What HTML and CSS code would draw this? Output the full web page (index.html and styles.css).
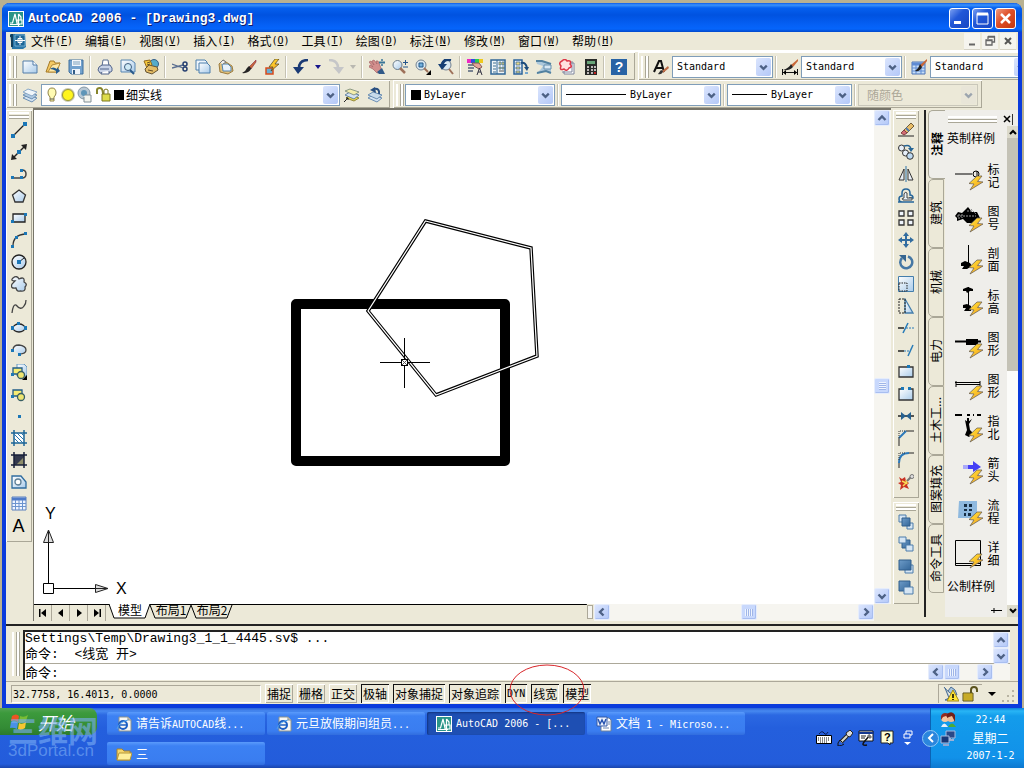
FILE: index.html
```html
<!DOCTYPE html>
<html lang="zh-CN">
<head>
  <meta charset="UTF-8">
  <meta name="viewport" content="width=device-width, initial-scale=1.0">
  <title>AutoCAD 2006 - [Drawing3.dwg]</title>
  <link rel="stylesheet" href="styles.css">
</head>
<body>

  <!-- Shared symbols -->
  <svg class="defs" aria-hidden="true">
    <defs>
      <linearGradient id="sky" x1="0" y1="0" x2="1" y2="1"><stop offset="0" stop-color="#fff"/><stop offset="1" stop-color="#a9cbea"/></linearGradient>
      <linearGradient id="steel" x1="0" y1="0" x2="1" y2="1"><stop offset="0" stop-color="#6e9cc8"/><stop offset="1" stop-color="#336699"/></linearGradient>
      <linearGradient id="bolt-fill" x1="0" y1="0" x2="1" y2="1"><stop offset="0" stop-color="#ffe838"/><stop offset="1" stop-color="#f79a1c"/></linearGradient>
      <symbol id="up" viewBox="0 0 16 16"><path d="M4.5 10L8 6.5L11.5 10" fill="none" stroke="#4d6185" stroke-width="2.4"/></symbol>
      <symbol id="down" viewBox="0 0 16 16"><path d="M4.5 6.5L8 10L11.5 6.5" fill="none" stroke="#4d6185" stroke-width="2.4"/></symbol>
      <symbol id="left" viewBox="0 0 16 16"><path d="M9.5 4.5L6 8L9.5 11.5" fill="none" stroke="#4d6185" stroke-width="2.4"/></symbol>
      <symbol id="right" viewBox="0 0 16 16"><path d="M6.5 4.5L10 8L6.5 11.5" fill="none" stroke="#4d6185" stroke-width="2.4"/></symbol>
      <symbol id="bolt" viewBox="0 0 16 16"><path d="M9 1L1 8.5L6 9L2 15L15 7L9.5 6.5L14 1Z" fill="url(#bolt-fill)" stroke="#6e6558" stroke-width=".8"/></symbol>
      <symbol id="acad" viewBox="0 0 16 16"><path d="M0 0H16V16H0Z" fill="#2a9488" stroke="#fff" stroke-width="2"/><path d="M2 12H4.5L7 3L9 12V14M2 13.5H12M10.5 3V15M10.5 3L13 6V9M9 9H14V13H9Z" fill="none" stroke="#fff" stroke-width="1.2"/></symbol>
      <symbol id="ie" viewBox="0 0 16 16"><path d="M3 1H12L15 4V15H3Z" fill="#f7f7f4" stroke="#8c938f"/><path d="M12 1V4H15" fill="#ccc" stroke="#8c938f"/><circle cx="7" cy="9" r="4" fill="none" stroke="#1d5fc4" stroke-width="2"/><path d="M3.5 9H11" stroke="#1d5fc4" stroke-width="1.5"/><path d="M1 13Q3 6 12 4" fill="none" stroke="#4aa0ee"/></symbol>
      <symbol id="layers" viewBox="0 0 16 16"><path d="M1 11L6 8L15 11L10 15Z" fill="#d3e3f2" stroke="#6c8fb3"/><path d="M1 8L6 5L15 8L10 12Z" fill="#aec9e2" stroke="#6c8fb3"/><path d="M1 5L6 2L15 5L10 9Z" fill="#f0f6fb" stroke="#8ba9c7"/></symbol>
      <symbol id="brush" viewBox="0 0 16 16"><path d="M15 1L8 8L10 10L15 3Z" fill="#c86838" stroke="#714" stroke-width=".5"/><path d="M8 7L10.5 9.5Q7 15 1 14Q5 12 6 9Z" fill="#252525"/></symbol>
      <symbol id="paste-shapes" viewBox="0 0 16 16"><path d="M2 4H11V10H2Z" fill="#f7ec72" stroke="#225d87" stroke-width="1.3"/><circle cx="10" cy="11" r="3.5" fill="#eee570" stroke="#375e63" stroke-width="1.3"/><path d="M0 9H3V12H0Z" fill="#1c78b5"/></symbol>
    </defs>
  </svg>

  <main class="window">
    <header class="title-bar">
      <svg class="icon"><use href="#acad"/></svg>
      <h1>AutoCAD 2006 - [Drawing3.dwg]</h1>
      <div class="window-buttons">
        <button type="button" aria-label="最小化"><svg class="glyph" viewBox="0 0 21 21"><path d="M5 13H12V16H5Z" fill="#fff"/></svg></button>
        <button type="button" aria-label="最大化"><svg class="glyph" viewBox="0 0 21 21"><path d="M5 5.5H16V16H5Z" fill="none" stroke="#fff"/><path d="M5 6H16" stroke="#fff" stroke-width="3"/></svg></button>
        <button type="button" class="close" aria-label="关闭"><svg class="glyph" viewBox="0 0 21 21"><path d="M6 6L15 15M15 6L6 15" stroke="#fff" stroke-width="2.5"/></svg></button>
      </div>
    </header>

    <nav class="menu-bar">
      <svg class="icon" viewBox="0 0 16 16"><path d="M0 1H15L16 14L13 16H2Z" fill="#2977a8"/><path d="M2 1V14M0 3H2" stroke="#13405d" stroke-width="2"/><path d="M5 2H15V13H5Z" fill="#1c6797" stroke="#a3d2e9" stroke-width=".6"/><path d="M10 3V12M5 7.5H15" stroke="#fff"/><path d="M8 5.5H12V9.5H8Z" fill="none" stroke="#fff"/></svg>
      <button type="button">文件<span class="en">(<u>F</u>)</span></button>
      <button type="button">编辑<span class="en">(<u>E</u>)</span></button>
      <button type="button">视图<span class="en">(<u>V</u>)</span></button>
      <button type="button">插入<span class="en">(<u>I</u>)</span></button>
      <button type="button">格式<span class="en">(<u>O</u>)</span></button>
      <button type="button">工具<span class="en">(<u>T</u>)</span></button>
      <button type="button">绘图<span class="en">(<u>D</u>)</span></button>
      <button type="button">标注<span class="en">(<u>N</u>)</span></button>
      <button type="button">修改<span class="en">(<u>M</u>)</span></button>
      <button type="button">窗口<span class="en">(<u>W</u>)</span></button>
      <button type="button">帮助<span class="en">(<u>H</u>)</span></button>
      <div class="child-buttons">
        <button type="button" aria-label="最小化图形"><svg class="icon" viewBox="0 0 16 16"><path d="M5 11.5H11" stroke="#666" stroke-width="2"/></svg></button>
        <button type="button" aria-label="还原图形"><svg class="icon" viewBox="0 0 16 16"><path d="M6 6V4H12.5V9H10M6 3.5H13M4 7H10V12H4ZM4 7.5H10" fill="none" stroke="#666" stroke-width="1.3"/></svg></button>
        <button type="button" aria-label="关闭图形"><svg class="icon" viewBox="0 0 16 16"><path d="M5 5L11 11M11 5L5 11" stroke="#555" stroke-width="2"/></svg></button>
      </div>
    </nav>

    <!-- Standard and styles toolbars -->
    <div class="toolbar-row">
      <div class="toolbar">
        <span class="grip"></span>
        <button type="button" class="tool" aria-label="新建"><svg class="icon" viewBox="0 0 16 16"><path d="M1 2H11L15 6V14H1Z" fill="url(#sky)" stroke="#527da8"/><path d="M11 2V6H15" fill="#fff" stroke="#527da8"/></svg></button>
        <button type="button" class="tool" aria-label="打开"><svg class="icon" viewBox="0 0 16 16"><path d="M1 13L5 2H9L10 4H15L11 13Z" fill="#f5ca64" stroke="#a57a27"/><path d="M3 13L7 6L15 4L12 13Z" fill="#ffe9a6" stroke="#b58b3b"/><path d="M5 10Q8 7 12 10V8L15 12L11 15V12Q8 10 5 10" fill="#275c8d"/></svg></button>
        <button type="button" class="tool" aria-label="保存"><svg class="icon" viewBox="0 0 16 16"><path d="M1 1H15V15H3L1 13Z" fill="#73a2ce" stroke="#3e6e9d"/><path d="M4 1H13V7H4Z" fill="#f4f7fb"/><path d="M5 3H12M5 5H12" stroke="#7ba0bd"/><path d="M4 10H12V15H4Z" fill="#eef4fa"/><path d="M5 11H7V15H5Z" fill="#315c86"/></svg></button>
        <span class="separator"></span>
        <button type="button" class="tool" aria-label="打印"><svg class="icon" viewBox="0 0 16 16"><path d="M5 7L6 1H11L12 7" fill="#fff" stroke="#5b7094"/><path d="M2 8L5 6H13L15 9V12L12 14H3L1 11Z" fill="#c8d3e7" stroke="#51648b"/><path d="M3 10H12M5 13L4 15H12V12" fill="#fff" stroke="#51648b"/></svg></button>
        <button type="button" class="tool" aria-label="打印预览"><svg class="icon" viewBox="0 0 16 16"><path d="M1 1H11L15 4V13H1Z" fill="url(#sky)" stroke="#5785b1"/><circle cx="8" cy="8" r="3.5" fill="#cfeaf6" stroke="#3d5e80"/><path d="M10 11L14 15" stroke="#28598a" stroke-width="2"/></svg></button>
        <button type="button" class="tool" aria-label="发布"><svg class="icon" viewBox="0 0 16 16"><circle cx="11" cy="5" r="4.5" fill="#55abc9" stroke="#375e87"/><path d="M1 2L7 1L9 6L4 9Z" fill="#f8cb3a" stroke="#94681c"/><path d="M2 10L6 6L14 8L15 11L9 15L3 13Z" fill="#e4bd66" stroke="#655434"/><path d="M4 4L7 3M4 6L7 5M5 11L10 12" stroke="#644f29"/></svg></button>
        <span class="separator"></span>
        <button type="button" class="tool" aria-label="剪切"><svg class="icon" viewBox="0 0 16 16"><path d="M0 5L11 9M0 9L11 6" stroke="#5b6f91" stroke-width="1.3"/><circle cx="13" cy="5" r="2" fill="none" stroke="#263f70" stroke-width="1.5"/><circle cx="13" cy="10" r="2" fill="none" stroke="#263f70" stroke-width="1.5"/></svg></button>
        <button type="button" class="tool" aria-label="复制"><svg class="icon" viewBox="0 0 16 16"><path d="M1 1H10L12 3V11H1Z" fill="#edf5fc" stroke="#4d7fac"/><path d="M4 4H12L15 7V14H4Z" fill="url(#sky)" stroke="#4d7fac"/></svg></button>
        <button type="button" class="tool" aria-label="粘贴"><svg class="icon" viewBox="0 0 16 16"><path d="M1 5L5 1L14 7L15 12L10 15L2 13Z" fill="#e1c079" stroke="#9c7b3d"/><path d="M4 5H10L13 8V12H5Z" fill="#e7f1fb" stroke="#5284b0"/><path d="M2 4L5 1L8 3L5 5" fill="#eee" stroke="#777"/></svg></button>
        <button type="button" class="tool" aria-label="特性匹配"><svg class="icon"><use href="#brush"/></svg></button>
        <button type="button" class="tool" aria-label="块编辑器"><svg class="icon" viewBox="0 0 16 16"><path d="M2 9H9V15H2Z" fill="#6aaed3" stroke="#d74c1c" stroke-width="1.5"/><path d="M11 0L5 8H9L7 12L15 5H11L15 0Z" fill="url(#bolt-fill)" stroke="#4a421c" stroke-width=".7"/></svg></button>
        <span class="separator"></span>
        <button type="button" class="tool" aria-label="放弃"><svg class="icon" viewBox="0 0 16 16"><path d="M15 1Q6 1 6 9" fill="none" stroke="#1a3a75" stroke-width="2.5"/><path d="M0 8H11L5 15Z" fill="#1a3a75"/></svg></button>
        <button type="button" class="drop" aria-label="放弃列表"><svg class="tiny" viewBox="0 0 8 8"><path d="M1 2H7L4 6Z" fill="#15158b"/></svg></button>
        <button type="button" class="tool" aria-label="重做"><svg class="icon" viewBox="0 0 16 16"><path d="M1 1Q10 1 10 9" fill="none" stroke="#c5c6c8" stroke-width="2.5"/><path d="M5 8H16L11 15Z" fill="#c5c6c8"/></svg></button>
        <button type="button" class="drop" aria-label="重做列表"><svg class="tiny" viewBox="0 0 8 8"><path d="M1 2H7L4 6Z" fill="#b9b8b1"/></svg></button>
        <span class="separator"></span>
        <button type="button" class="tool" aria-label="实时平移"><svg class="icon" viewBox="0 0 16 16"><path d="M0 3L2 2L5 6L3 2L5 1L8 5L7 2L9 2L12 9V13L8 14L4 10L0 8L1 6L4 8Z" fill="#d38f8d" stroke="#a56265" stroke-width=".7"/><path d="M8 13L13 9L16 15H10Z" fill="#315a88"/><path d="M13 0V7M10 3.5H16M12 1H14M12 6H14M11 2V5M15 2V5" stroke="#397497"/></svg></button>
        <button type="button" class="tool" aria-label="实时缩放"><svg class="icon" viewBox="0 0 16 16"><circle cx="5.5" cy="6" r="4.5" fill="url(#sky)" stroke="#687a8a"/><path d="M8 9L13 14" stroke="#9e715a" stroke-width="2.5"/><path d="M11 3.5H16M13.5 1V6M11 8H16" stroke="#25568b"/></svg></button>
        <button type="button" class="tool" aria-label="窗口缩放"><svg class="icon" viewBox="0 0 16 16"><circle cx="6" cy="6" r="5" fill="#d9e8f2" stroke="#738290"/><path d="M4 4H8V8H4Z" fill="#72b0dd" stroke="#245888"/><path d="M9 9L13 13" stroke="#9e715a" stroke-width="2"/><path d="M16 11V16H11Z"/></svg></button>
        <button type="button" class="tool" aria-label="缩放上一个"><svg class="icon" viewBox="0 0 16 16"><circle cx="8" cy="6" r="5" fill="#d9e8f2" stroke="#738290"/><path d="M11 10L15 15" stroke="#9e715a" stroke-width="2"/><path d="M13 1Q6 -1 4 6" fill="none" stroke="#163e74" stroke-width="3"/><path d="M0 5H9L4 11Z" fill="#163e74"/></svg></button>
        <span class="separator"></span>
        <button type="button" class="tool" aria-label="特性"><svg class="icon" viewBox="0 0 16 16"><path d="M0 0H4V4H0Z" fill="#ed28c2"/><path d="M4 0H8V4H4Z" fill="#304fdf"/><path d="M8 0H12V4H8Z" fill="#28cb55"/><path d="M12 0H16V4H12Z" fill="#efc91e"/><path d="M1 6H8M1 9H7M1 12H6" stroke="#516279" stroke-width="1.5"/><path d="M5 4L12 4L15 8L12 10L7 7Z" fill="#e6a598" stroke="#815b55"/><path d="M10 16L12.5 9L15 16M11 13H14" fill="none" stroke="#334"/></svg></button>
        <button type="button" class="tool" aria-label="设计中心"><svg class="icon" viewBox="0 0 16 16"><path d="M1 1H15V15H1Z" fill="#f0f5f7" stroke="#2f6697" stroke-width="1.5"/><path d="M7 1V15" stroke="#2f6697"/><path d="M3 4H6M3 7H6M3 10H6M3 13H6" stroke="#3f6e91"/><path d="M9 3H11V6H9ZM12 3H14V6H12ZM9 8H11V10H9ZM12 8H14V10H12Z" fill="#eadb78" stroke="#326390" stroke-width=".7"/><path d="M9 12H14" stroke="#555"/></svg></button>
        <button type="button" class="tool" aria-label="工具选项板"><svg class="icon" viewBox="0 0 16 16"><path d="M1 1H9V15H1Z" fill="#eaf2fa" stroke="#2b639a" stroke-width="1.5"/><path d="M3 3H7V6H3ZM3 8H7V10H3ZM3 12H7V14H3Z" fill="#e8d987" stroke="#326390" stroke-width=".7"/><path d="M8 4Q13 3 14 9" fill="none" stroke="#1c4b7b" stroke-width="2"/><path d="M11 8H16L14 12Z" fill="#1c4b7b"/><path d="M12 13H15V15H12Z" fill="#76a7cd"/></svg></button>
        <button type="button" class="tool" aria-label="图纸集"><svg class="icon" viewBox="0 0 16 16"><path d="M0 2H6L15 5V14L10 12L0 15L5 10L7 7L1 5Z" fill="#acc8dc"/><path d="M0 2H6L15 5M1 14L10 12L15 14" fill="none" stroke="#5281a0" stroke-width="2"/><path d="M8 6H15V10H8Z" fill="#d8e8f4" stroke="#668fae"/></svg></button>
        <button type="button" class="tool" aria-label="标记集"><svg class="icon" viewBox="0 0 16 16"><path d="M11 4H15V15H5V12M13 2V13H3" fill="#fff" stroke="#7c849b"/><path d="M3 2Q6 -1 8 2Q13 1 11 5Q14 8 10 9Q8 13 5 10Q0 12 2 7Q-1 4 3 2Z" fill="#ffe0e0" stroke="#dc3548" stroke-width="1.5"/></svg></button>
        <button type="button" class="tool" aria-label="快速计算器"><svg class="icon" viewBox="0 0 16 16"><path d="M3 0H15V16H3Z" fill="#292b29"/><path d="M5 2H13V5H5Z" fill="#68a478"/><path d="M5 8H7M9 8H11M12 8H14M5 11H7M9 11H11M12 11H14M5 14H7M9 14H11" stroke="#f2eaea" stroke-width="1.5"/><path d="M12 14H14" stroke="#e22" stroke-width="1.5"/></svg></button>
        <span class="separator"></span>
        <button type="button" class="tool help" aria-label="帮助">?</button>
      </div>
      <div class="toolbar fill">
        <span class="grip"></span>
        <svg class="tool-label" viewBox="0 0 16 16"><path d="M1 13L6 2H8L11 13M3 9H10" fill="none" stroke="#111" stroke-width="2"/><path d="M15 7L9 12L10 14L16 9Z" fill="#be6c45"/><path d="M10 12Q9 16 5 15L8 11Z" fill="#333"/></svg>
        <label class="combo style"><select aria-label="文字样式"><option>Standard</option></select><svg class="arrow"><use href="#down"/></svg></label>
        <span class="separator"></span>
        <svg class="tool-label" viewBox="0 0 16 16"><path d="M.5 10V16M15.5 10V16M1 13.5H15" stroke="#111"/><path d="M1 13.5L4 11V16ZM15 13.5L12 11V16Z"/><path d="M16 0L9 6L11 8L16 2Z" fill="#c86838"/><path d="M9 5L11 8Q7 12 1 11Q7 9 9 5Z" fill="#222"/></svg>
        <label class="combo style"><select aria-label="标注样式"><option>Standard</option></select><svg class="arrow"><use href="#down"/></svg></label>
        <span class="separator"></span>
        <svg class="tool-label" viewBox="0 0 16 16"><path d="M1 3H14V15H1Z" fill="#c6def7" stroke="#4c75b6"/><path d="M1 5H14" stroke="#5e8bd3" stroke-width="3"/><path d="M1 9H14M1 12H14M5 6V15M10 6V15" stroke="#5e8bd3"/><path d="M16 0L9 6L11 8L16 2Z" fill="#c86838"/><path d="M9 5L11 8Q9 13 4 12Q8 9 9 5Z" fill="#222"/></svg>
        <label class="combo style"><select aria-label="表格样式"><option>Standard</option></select><svg class="arrow"><use href="#down"/></svg></label>
      </div>
    </div>

    <!-- Layers and properties toolbars -->
    <div class="toolbar-row">
      <div class="toolbar">
        <span class="grip"></span>
        <button type="button" class="tool" aria-label="图层特性管理器"><svg class="icon"><use href="#layers"/></svg></button>
        <label class="combo layer">
          <select class="cn" aria-label="图层"><option>细实线</option></select>
          <svg class="layer-state" viewBox="0 0 82 18"><path d="M4 7Q4 2 8 2Q12 2 12 7Q12 9 10 11V15H6V11Q4 9 4 7Z" fill="#fffbb3" stroke="#91844a"/><path d="M6 13H10" stroke="#555"/><circle cx="24" cy="9" r="7" fill="#c9c9b4"/><circle cx="24" cy="9" r="5.5" fill="#fff51e" stroke="#9b9835"/><circle cx="40" cy="7" r="6" fill="#b8c8d5" stroke="#8597a5"/><circle cx="40" cy="7" r="3" fill="#5f95b8"/><path d="M41 9H47V16H40V11" fill="#f4f4ee" stroke="#819097"/><path d="M53 8V4Q53 2 56 2Q59 2 59 9" fill="none" stroke="#87852c" stroke-width="2"/><path d="M58 8H66V15H58Z" fill="#dedc4a" stroke="#7d7920"/><path d="M60 8V4Q62 2 64 4V8" fill="none" stroke="#7d7920"/><path d="M70 4H80V14H70Z"/></svg>
          <svg class="arrow"><use href="#down"/></svg>
        </label>
        <button type="button" class="tool" aria-label="将对象的图层置为当前"><svg class="icon" viewBox="0 0 16 16"><path d="M2 11L7 8L15 11L10 14Z" fill="#ecd747" stroke="#948b3e"/><path d="M1 8L6 5L15 8L10 12Z" fill="#d4e2f0" stroke="#6787a5"/><path d="M1 4L6 2L15 5L10 8Z" fill="#f4edac" stroke="#8b9885"/><path d="M0 15L4 11M2 11H4V13" fill="none" stroke="#222"/></svg></button>
        <button type="button" class="tool" aria-label="上一个图层"><svg class="icon" viewBox="0 0 16 16"><path d="M1 11L6 8L15 11L10 15Z" fill="#d3e3f2" stroke="#6c8fb3"/><path d="M1 8L6 5L15 8L10 12Z" fill="#c7daea" stroke="#6c8fb3"/><path d="M12 7Q13 1 7 2" fill="none" stroke="#294f80" stroke-width="2"/><path d="M3 3L8 0L9 6Z" fill="#294f80"/></svg></button>
      </div>
      <div class="toolbar">
        <span class="grip"></span>
        <label class="combo color"><select aria-label="颜色"><option>ByLayer</option></select><span class="swatch"></span><svg class="arrow"><use href="#down"/></svg></label>
        <span class="separator"></span>
        <label class="combo linetype"><select aria-label="线型"><option>ByLayer</option></select><span class="sample"></span><svg class="arrow"><use href="#down"/></svg></label>
        <span class="separator"></span>
        <label class="combo weight"><select aria-label="线宽"><option>ByLayer</option></select><span class="sample"></span><svg class="arrow"><use href="#down"/></svg></label>
        <span class="separator"></span>
        <label class="combo plot"><select class="cn" aria-label="打印样式" disabled><option>随颜色</option></select><svg class="arrow"><use href="#down"/></svg></label>
      </div>
    </div>

    <div class="workspace">
      <!-- Draw toolbar -->
      <div class="dock">
        <div class="toolbar vertical">
          <span class="grip"></span>
          <button type="button" class="tool" aria-label="直线"><svg class="icon" viewBox="0 0 16 16"><path d="M2 14L14 2" stroke="#222" stroke-width="1.3"/><path d="M0 12H4V16H0ZM12 0H16V4H12Z" fill="#1b77b7"/></svg></button>
          <button type="button" class="tool" aria-label="构造线"><svg class="icon" viewBox="0 0 16 16"><path d="M2 14L14 2" stroke="#222" stroke-width="1.5"/><path d="M0 16L1 10L6 15ZM16 0L10 1L15 6Z" fill="#222"/><path d="M6 6H10V10H6Z" fill="#1b77b7"/></svg></button>
          <button type="button" class="tool" aria-label="多段线"><svg class="icon" viewBox="0 0 16 16"><path d="M2 12H11Q15 12 15 8Q15 4 11 4" fill="none" stroke="#444" stroke-width="1.5"/><path d="M0 10H3V13H0ZM9 10H12V13H9ZM9 3H12V6H9Z" fill="#1b77b7"/></svg></button>
          <button type="button" class="tool" aria-label="正多边形"><svg class="icon" viewBox="0 0 16 16"><path d="M8 2L14.5 7L12 14H4L1.5 7Z" fill="url(#sky)" stroke="#333" stroke-width="1.3"/></svg></button>
          <button type="button" class="tool" aria-label="矩形"><svg class="icon" viewBox="0 0 16 16"><path d="M2 4H14V12H2Z" fill="url(#sky)" stroke="#222" stroke-width="1.3"/><path d="M0 10H3V13H0ZM13 3H16V6H13Z" fill="#1b77b7"/></svg></button>
          <button type="button" class="tool" aria-label="圆弧"><svg class="icon" viewBox="0 0 16 16"><path d="M2 14Q2 3 14 2" fill="none" stroke="#333" stroke-width="1.3"/><path d="M0 13H3V16H0ZM4 4H7V7H4ZM13 0H16V3H13Z" fill="#1b77b7"/></svg></button>
          <button type="button" class="tool" aria-label="圆"><svg class="icon" viewBox="0 0 16 16"><circle cx="8" cy="8" r="7" fill="url(#sky)" stroke="#222" stroke-width="1.3"/><path d="M8 8L13 4" stroke="#222"/><path d="M6 6H10V10H6Z" fill="#1b77b7"/></svg></button>
          <button type="button" class="tool" aria-label="修订云线"><svg class="icon" viewBox="0 0 16 16"><path d="M4 5Q-1 5 2 2Q6-1 8 3Q14 0 13 6Q17 8 14 11Q15 16 9 15Q6 16 5 12Q-1 13 1 8Z" fill="url(#sky)" stroke="#444" stroke-width="1.3"/></svg></button>
          <button type="button" class="tool" aria-label="样条曲线"><svg class="icon" viewBox="0 0 16 16"><path d="M1 15Q2 6 5 7Q10 13 13 8Q15 6 15 2" fill="none" stroke="#444" stroke-width="1.3"/></svg></button>
          <button type="button" class="tool" aria-label="椭圆"><svg class="icon" viewBox="0 0 16 16"><ellipse cx="8" cy="8" rx="6" ry="4" fill="url(#sky)" stroke="#222" stroke-width="1.3"/><path d="M0 6H3V10H0ZM13 6H16V10H13ZM6 2H9V5H6Z" fill="#1b77b7"/></svg></button>
          <button type="button" class="tool" aria-label="椭圆弧"><svg class="icon" viewBox="0 0 16 16"><path d="M2 8Q2 3 8 3Q15 4 15 8Q15 12 8 12" fill="url(#sky)" stroke="#444" stroke-width="1.3"/><path d="M0 7H3V10H0ZM7 11H10V14H7Z" fill="#1b77b7"/></svg></button>
          <button type="button" class="tool" aria-label="插入块"><svg class="icon" viewBox="0 0 16 16"><path d="M6 0H13L16 3V12H6Z" fill="url(#sky)" stroke="#6697bd"/><use href="#paste-shapes"/><path d="M16 11V16H11Z"/></svg></button>
          <button type="button" class="tool" aria-label="创建块"><svg class="icon"><use href="#paste-shapes"/></svg></button>
          <button type="button" class="tool" aria-label="点"><svg class="icon" viewBox="0 0 16 16"><path d="M7 7H10V10H7Z" fill="#1b77b7"/></svg></button>
          <button type="button" class="tool" aria-label="图案填充"><svg class="icon" viewBox="0 0 16 16"><path d="M3 3H13V13H3Z" fill="#fff"/><path d="M3 0V16M13 0V16M0 3H16M0 13H16" stroke="#1c6597" stroke-width="1.5"/><path d="M3 8L8 13M3 4L12 13M6 3L13 10M10 3L13 6" stroke="#2a76ab"/></svg></button>
          <button type="button" class="tool" aria-label="渐变色"><svg class="icon" viewBox="0 0 16 16"><path d="M3 3H13V13H3Z" fill="#33394d"/><path d="M13 5V13H5Z" fill="#8e8d6a"/><path d="M3 0V16M13 0V16M0 3H16M0 13H16" stroke="#171f38" stroke-width="1.5"/></svg></button>
          <button type="button" class="tool" aria-label="面域"><svg class="icon" viewBox="0 0 16 16"><path d="M1 2H10L15 8V14H1Z" fill="url(#sky)" stroke="#2f6c9e" stroke-width="1.3"/><circle cx="7" cy="8" r="3" fill="#fff" stroke="#5e7f95" stroke-width="1.3"/></svg></button>
          <button type="button" class="tool" aria-label="表格"><svg class="icon" viewBox="0 0 16 16"><path d="M1 1H15V14H1Z" fill="#eef4ff" stroke="#5a80bd"/><path d="M1 3H15" stroke="#4f7bc8" stroke-width="3"/><path d="M1 7.5H15M1 10.5H15M4.5 4V14M8 4V14M11.5 4V14" stroke="#6c94cf"/></svg></button>
          <button type="button" class="tool mtext" aria-label="多行文字">A</button>
        </div>
      </div>

      <!-- Drawing window -->
      <section class="document">
        <div class="canvas">
          <svg class="drawing" aria-label="图形">
            <rect x="262" y="194" width="209" height="157" fill="none" stroke="#000" stroke-width="10" stroke-linejoin="round"/>
            <path d="M391.5 111L497 138L503 246L402 285L334 201Z" fill="none" stroke="#000" stroke-width="3.5"/>
            <path d="M391.5 111L497 138L503 246L402 285L334 201Z" fill="none" stroke="#fff" stroke-width="1.2"/>
            <path d="M345.5 252.5H395.5M370.5 228V278" fill="none" stroke="#000" shape-rendering="crispEdges"/>
            <path d="M367.5 249.5H373.5V255.5H367.5Z" fill="#fff" stroke="#000" shape-rendering="crispEdges"/>
            <path d="M368 250L373 255M373 250L368 255" stroke="#555"/>
          </svg>
          <svg class="ucs" viewBox="0 0 90 92"><path d="M1.5 77.5H11.5V87.5H1.5ZM6.5 77V36M12 82.5H54" fill="none" stroke="#000"/><path d="M6.5 24L1.5 36.5H11.5ZM6.5 25V36M66 82.5L53.5 78.5V86.5ZM54 82.5H65" fill="#ddd" stroke="#222"/><text x="3" y="13">Y</text><text x="74" y="88">X</text></svg>
          <div class="scroll v">
            <button type="button" aria-label="向上滚动"><svg class="icon"><use href="#up"/></svg></button>
            <span class="before"></span><span class="thumb"></span><span class="after"></span>
            <button type="button" aria-label="向下滚动"><svg class="icon"><use href="#down"/></svg></button>
          </div>
        </div>
        <div class="sheet-bar">
          <div class="sheet-nav">
            <button type="button" aria-label="第一个"><svg class="icon" viewBox="0 0 16 16"><path d="M4 4H5.5V12H4ZM11 4V12L6 8Z"/></svg></button>
            <button type="button" aria-label="上一个"><svg class="icon" viewBox="0 0 16 16"><path d="M10 4V12L5 8Z"/></svg></button>
            <button type="button" aria-label="下一个"><svg class="icon" viewBox="0 0 16 16"><path d="M6 4V12L11 8Z"/></svg></button>
            <button type="button" aria-label="最后一个"><svg class="icon" viewBox="0 0 16 16"><path d="M5 4V12L10 8ZM10.5 4H12V12H10.5Z"/></svg></button>
          </div>
          <div class="sheets">
            <button type="button" class="sheet active"><svg class="outline" viewBox="0 0 42 17"><path d="M0 0L5 14H36L41 0" fill="#fff" stroke="#000"/></svg><span>模型</span></button>
            <button type="button" class="sheet"><svg class="outline" viewBox="0 0 42 17"><path d="M0 .5H41" stroke="#000"/><path d="M0 1L5 14H36L41 1" fill="#ece9d8" stroke="#000"/></svg><span>布局1</span></button>
            <button type="button" class="sheet"><svg class="outline" viewBox="0 0 42 17"><path d="M0 .5H41" stroke="#000"/><path d="M0 1L5 14H36L41 1" fill="#ece9d8" stroke="#000"/></svg><span>布局2</span></button>
          </div>
          <span class="splitter"></span>
          <div class="scroll h">
            <button type="button" aria-label="向左滚动"><svg class="icon"><use href="#left"/></svg></button>
            <span class="before"></span><span class="thumb"></span><span class="after"></span>
            <button type="button" aria-label="向右滚动"><svg class="icon"><use href="#right"/></svg></button>
          </div>
        </div>
      </section>

      <!-- Modify and draw order toolbars -->
      <div class="dock">
        <div class="toolbar vertical">
          <span class="grip"></span>
          <button type="button" class="tool" aria-label="删除"><svg class="icon" viewBox="0 0 16 16"><path d="M0 14H16" stroke="#222"/><path d="M6 8L13 1L16 4L9 11Z" fill="#e8bd67" stroke="#715d38"/><path d="M6 8L9 11L6 13L3 11Z" fill="#d36b73" stroke="#814146"/><path d="M8 6L11 9" stroke="#547eb0" stroke-width="2"/></svg></button>
          <button type="button" class="tool" aria-label="复制对象"><svg class="icon" viewBox="0 0 16 16"><circle cx="3.5" cy="4" r="3" fill="#e7f0fa" stroke="#333"/><circle cx="7.5" cy="9" r="3" fill="#e7f0fa" stroke="#333"/><circle cx="12" cy="12" r="3.3" fill="#bdd9f1" stroke="#333"/><path d="M6 2Q12 0 13 5" fill="none" stroke="#266594" stroke-width="1.5"/><path d="M10 4H16L13 8Z" fill="#266594"/></svg></button>
          <button type="button" class="tool" aria-label="镜像"><svg class="icon" viewBox="0 0 16 16"><path d="M8 0V16" stroke="#2b73a8"/><path d="M6 3V14H1ZM10 3V14H15Z" fill="#e9eff5" stroke="#333"/></svg></button>
          <button type="button" class="tool" aria-label="偏移"><svg class="icon" viewBox="0 0 16 16"><path d="M0 14H4Q1 14 1 11Q1 8 4 8V5Q4 1 8 1Q12 1 12 5V7Q15 7 15 10H11M4 14H16" fill="none" stroke="#25659a" stroke-width="1.5"/><path d="M5 12Q3 10 6 10V6Q7 3 9 5V10H14V12Z" fill="#e8f3fb" stroke="#444"/></svg></button>
          <button type="button" class="tool" aria-label="阵列"><svg class="icon" viewBox="0 0 16 16"><path d="M1 1H6V6H1ZM10 1H15V6H10ZM1 10H6V15H1ZM10 10H15V15H10Z" fill="#eff5fd" stroke="#333" stroke-width="1.3"/></svg></button>
          <button type="button" class="tool" aria-label="移动"><svg class="icon" viewBox="0 0 16 16"><path d="M8 2V14M2 8H14" stroke="#316c9f" stroke-width="2"/><path d="M8 0L11 4H5ZM8 16L5 12H11ZM0 8L4 5V11ZM16 8L12 5V11Z" fill="#316c9f"/></svg></button>
          <button type="button" class="tool" aria-label="旋转"><svg class="icon" viewBox="0 0 16 16"><path d="M4 4A6 6 0 1 0 10 2.5" fill="none" stroke="#4577a4" stroke-width="2.5"/><path d="M1 1H8V8Z" fill="#35658f"/></svg></button>
          <button type="button" class="tool" aria-label="缩放"><svg class="icon" viewBox="0 0 16 16"><path d="M.5 .5H15.5V15.5H.5Z" fill="url(#sky)" stroke="#447eac"/><path d="M1 7H9V15H1Z" fill="none" stroke="#222" stroke-dasharray="1.5 1"/></svg></button>
          <button type="button" class="tool" aria-label="拉伸"><svg class="icon" viewBox="0 0 16 16"><path d="M7 1L15 15H7Z" fill="url(#sky)" stroke="#447eac" stroke-width="1.3"/><path d="M1 1H7V15H1Z" fill="none" stroke="#222" stroke-dasharray="2 1"/></svg></button>
          <button type="button" class="tool" aria-label="修剪"><svg class="icon" viewBox="0 0 16 16"><path d="M0 8H6" stroke="#222" stroke-width="1.5"/><path d="M5 13L10 3" stroke="#287bb8" stroke-width="1.5"/><path d="M8 8H16" stroke="#287bb8" stroke-dasharray="2 1"/></svg></button>
          <button type="button" class="tool" aria-label="延伸"><svg class="icon" viewBox="0 0 16 16"><path d="M0 9H6" stroke="#222" stroke-width="1.5"/><path d="M6 9H12" stroke="#287bb8" stroke-dasharray="2 1"/><path d="M10 14L15 3" stroke="#287bb8" stroke-width="1.5"/></svg></button>
          <button type="button" class="tool" aria-label="打断于点"><svg class="icon" viewBox="0 0 16 16"><path d="M1 3H15V13H1Z" fill="url(#sky)" stroke="#333" stroke-width="1.3"/><path d="M9 1H12V4H9Z" fill="#1b77b7"/></svg></button>
          <button type="button" class="tool" aria-label="打断"><svg class="icon" viewBox="0 0 16 16"><path d="M4 3H1V14H15V3H12" fill="url(#sky)" stroke="#333" stroke-width="1.3"/><path d="M3 1H6V4H3ZM10 1H13V4H10Z" fill="#1b77b7"/></svg></button>
          <button type="button" class="tool" aria-label="合并"><svg class="icon" viewBox="0 0 16 16"><path d="M0 8H16" stroke="#222" stroke-width="1.5"/><path d="M3 4L8 8L3 12ZM13 4L8 8L13 12Z" fill="#266191"/></svg></button>
          <button type="button" class="tool" aria-label="倒角"><svg class="icon" viewBox="0 0 16 16"><path d="M1 16V8M8 1H16" stroke="#222"/><path d="M1 8L8 1" stroke="#2c79ba" stroke-width="2"/><path d="M1 8V1H8" fill="none" stroke="#333" stroke-dasharray="1 1"/></svg></button>
          <button type="button" class="tool" aria-label="圆角"><svg class="icon" viewBox="0 0 16 16"><path d="M1 16V11M11 1H16" stroke="#222"/><path d="M1 11Q1 1 11 1" fill="none" stroke="#2c79ba" stroke-width="2"/><path d="M1 8V1H8" fill="none" stroke="#333" stroke-dasharray="1 1"/></svg></button>
          <button type="button" class="tool" aria-label="分解"><svg class="icon" viewBox="0 0 16 16"><path d="M1 3L4 5L7 3L8 7L11 9L9 11L11 15L6 13L2 16L3 11L0 9L3 8Z" fill="#c93222"/><path d="M4 7L8 9L5 12M8 6L9 10" fill="none" stroke="#f9d955" stroke-width="1.5"/><path d="M9 7L13 3" stroke="#777" stroke-width="2"/><circle cx="14" cy="2.500" r="2" fill="#ddd" stroke="#777"/></svg></button>
        </div>
        <div class="toolbar vertical">
          <span class="grip"></span>
          <button type="button" class="tool" aria-label="前置"><svg class="icon" viewBox="0 0 16 16"><path d="M1 1H8V8H1ZM9 9H15V15H9Z" fill="#d5e5f3" stroke="#4c7dab"/><path d="M4 4H12V12H4Z" fill="url(#steel)" stroke="#315f8c"/></svg></button>
          <button type="button" class="tool" aria-label="后置"><svg class="icon" viewBox="0 0 16 16"><path d="M4 4H12V12H4Z" fill="url(#steel)" stroke="#315f8c"/><path d="M1 1H8V7H1ZM8 9H15V15H8Z" fill="#d5e5f3" stroke="#4c7dab"/></svg></button>
          <button type="button" class="tool" aria-label="置于对象之上"><svg class="icon" viewBox="0 0 16 16"><path d="M7 7H15V15H7Z" fill="#d5e5f3" stroke="#4c7dab"/><path d="M1 2H13V12H1Z" fill="url(#steel)" stroke="#315f8c"/></svg></button>
          <button type="button" class="tool" aria-label="置于对象之下"><svg class="icon" viewBox="0 0 16 16"><path d="M1 1H12V11H1Z" fill="url(#steel)" stroke="#315f8c"/><path d="M6 7H15V14H6Z" fill="#d5e5f3" stroke="#4c7dab"/></svg></button>
        </div>
      </div>

      <!-- Tool palettes -->
      <aside class="palette">
        <div class="palette-tabs">
          <button type="button" class="active"><span>注释</span></button>
          <button type="button"><span>建筑</span></button>
          <button type="button"><span>机械</span></button>
          <button type="button"><span>电力</span></button>
          <button type="button"><span>土木工...</span></button>
          <button type="button"><span>图案填充</span></button>
          <button type="button"><span>命令工具</span></button>
        </div>
        <div class="palette-main">
          <div class="palette-head">
            <span class="grip"></span>
            <button type="button" aria-label="关闭选项板"><svg class="tiny" viewBox="0 0 8 8"><path d="M1 1L7 7M7 1L1 7" stroke="#000" stroke-width="1.5"/></svg></button>
          </div>
          <div class="palette-body">
            <div class="palette-list">
              <h2>英制样例</h2>
              <button type="button" class="sample-tool"><svg viewBox="0 0 30 32"><path d="M1 15H18" stroke="#000"/><path d="M23 12V17" stroke="#000"/><circle cx="22" cy="15" r="3" fill="none" stroke="#000"/><use href="#bolt" x="14" y="16" width="16" height="16"/></svg><span>标记</span></button>
              <button type="button" class="sample-tool"><svg viewBox="0 0 30 32"><path d="M1 15L4 11L8 12L14 6L18 11H23L26 17L20 22H13L9 18L3 20V17Z"/><path d="M5 13V18M8 13V17M3 15H22M13 10H18M17 8L22 13" stroke="#999" stroke-dasharray="2 1"/><use href="#bolt" x="14" y="16" width="16" height="16"/></svg><span>图号</span></button>
              <button type="button" class="sample-tool"><svg viewBox="0 0 30 32"><path d="M14.5 2V20" stroke="#000"/><path d="M7 20L11 18L16 20L18 23L13 26H8L10 23H7Z"/><use href="#bolt" x="14" y="16" width="16" height="16"/></svg><span>剖面</span></button>
              <button type="button" class="sample-tool"><svg viewBox="0 0 30 32"><path d="M14.5 2V23" stroke="#000"/><path d="M9 4L14 2L19 4V6H16L13 8L12 6H9ZM9 20L13 19L17 21V26H10L12 23H9Z"/><use href="#bolt" x="14" y="16" width="16" height="16"/></svg><span>标高</span></button>
              <button type="button" class="sample-tool"><svg viewBox="0 0 30 32"><path d="M1 14.500H27" stroke="#000" stroke-width="2"/><path d="M12 12H24V18H12Z"/><use href="#bolt" x="14" y="16" width="16" height="16"/></svg><span>图形</span></button>
              <button type="button" class="sample-tool"><svg viewBox="0 0 30 32"><path d="M1 13.5H26M2 15.5H26M2 12V18M26 12V17" stroke="#000"/><use href="#bolt" x="14" y="16" width="16" height="16"/></svg><span>图形</span></button>
              <button type="button" class="sample-tool"><svg viewBox="0 0 30 32"><path d="M1 4H8M13 4H16M19 4H20M23 4H27M14 7V25" stroke="#000" stroke-width="2"/><path d="M11 9L14 11L18 8L15 13L16 19L19 22L15 26L11 24L13 19Z"/><use href="#bolt" x="14" y="16" width="16" height="16"/></svg><span>指北</span></button>
              <button type="button" class="sample-tool"><svg viewBox="0 0 30 32"><path d="M9 12H19V8L27 14L19 19V16H9Z" fill="#4540f5"/><path d="M9 12H14V16H9Z" fill="#aaa9fa"/><use href="#bolt" x="14" y="16" width="16" height="16"/></svg><span>箭头</span></button>
              <button type="button" class="sample-tool"><svg viewBox="0 0 30 32"><path d="M5 6H23V23H4Z" fill="#8fb9df"/><path d="M10 9H13V12H10ZM15 9H18V12H15ZM10 14H13V16H10ZM15 14H18V16H15ZM10 18H12V21H10ZM14 18H17V21H14Z" fill="#172e45"/><use href="#bolt" x="14" y="16" width="16" height="16"/></svg><span>流程</span></button>
              <button type="button" class="sample-tool"><svg viewBox="0 0 30 32"><path d="M1.5 3.5H26.5V28.5H1.5ZM2 26.5H26" fill="none" stroke="#000"/><use href="#bolt" x="14" y="16" width="16" height="16"/></svg><span>详细</span></button>
              <h2>公制样例</h2>
              <svg class="next-sample" viewBox="0 0 60 10"><path d="M46 5.5H57M49 3V8" stroke="#000"/></svg>
            </div>
            <div class="palette-scroll">
              <button type="button" aria-label="向上"><svg class="tiny" viewBox="0 0 8 8"><path d="M1 6L4 3L7 6" fill="none" stroke="#000" stroke-width="2"/></svg></button>
              <span class="bar"></span>
              <button type="button" aria-label="向下"><svg class="tiny" viewBox="0 0 8 8"><path d="M1 2L4 5L7 2" fill="none" stroke="#000" stroke-width="2"/></svg></button>
            </div>
          </div>
        </div>
      </aside>
    </div>

    <!-- Command line -->
    <section class="command">
      <span class="grip"></span>
      <div class="command-box">
        <div class="history">
          <div class="log"><p class="mono">Settings\Temp\Drawing3_1_1_4445.sv$ ...</p><p>命令<span class="mono">:&nbsp; &lt;</span>线宽<span class="mono">&nbsp;</span>开<span class="mono">&gt;</span></p></div>
          <div class="scroll v">
            <button type="button" aria-label="向上"><svg class="icon"><use href="#up"/></svg></button>
            <button type="button" aria-label="向下"><svg class="icon"><use href="#down"/></svg></button>
          </div>
        </div>
        <div class="prompt">
          <label for="cmd">命令<span class="mono">:</span></label>
          <input type="text" id="cmd">
          <div class="scroll h">
            <button type="button" aria-label="向左"><svg class="icon"><use href="#left"/></svg></button>
            <span class="thumb"></span><span class="after"></span>
            <button type="button" aria-label="向右"><svg class="icon"><use href="#right"/></svg></button>
          </div>
        </div>
      </div>
    </section>

    <footer class="status">
      <output class="coords en">32.7758, 16.4013, 0.0000</output>
      <div class="toggles">
        <button type="button">捕捉</button>
        <button type="button">栅格</button>
        <button type="button">正交</button>
        <button type="button" class="on">极轴</button>
        <button type="button" class="on">对象捕捉</button>
        <button type="button" class="on">对象追踪</button>
        <button type="button" class="on"><span class="en">DYN</span></button>
        <button type="button" class="on marked">线宽<svg class="mark" viewBox="0 0 76 52"><ellipse cx="38" cy="26" rx="37" ry="25" fill="none" stroke="#d8262a"/></svg></button>
        <button type="button" class="on">模型</button>
      </div>
      <div class="status-tray">
        <svg class="icon" viewBox="0 0 16 16"><path d="M1 1Q7 9 14 9Q13 3 8 1L5 5M2 2L6 12L2 14H9" fill="#a8c4dc" stroke="#496d95"/><path d="M10 4L16 15H4Z" fill="#ffe534" stroke="#a28a19"/><path d="M10 8V12M10 13V14" stroke="#000" stroke-width="1.5"/></svg>
        <svg class="icon" viewBox="0 0 16 16"><path d="M9 8V4Q9 1 12 1Q15 1 15 4V6" fill="none" stroke="#5b541e" stroke-width="2"/><path d="M1 7H11V15H1Z" fill="#e8c92f" stroke="#5d521a"/><path d="M2 9H10M2 11H10M2 13H10" stroke="#a68d20"/></svg>
      </div>
      <button type="button" class="drop" aria-label="状态栏菜单"><svg class="tiny" viewBox="0 0 8 8"><path d="M0 2H8L4 6Z"/></svg></button>
      <svg class="resize" viewBox="0 0 14 14"><path d="M10 1H12V3H10ZM10 6H12V8H10ZM10 11H12V13H10ZM5 6H7V8H5ZM5 11H7V13H5ZM0 11H2V13H0Z" fill="#b8b4a2"/></svg>
    </footer>
  </main>

  <!-- Taskbar -->
  <footer class="taskbar">
    <div class="start-area">
      <button type="button" class="start"><svg class="flag" viewBox="0 0 20 20"><path d="M2 4Q6 1 9 4L8 10Q5 7 1 9Z" fill="#ed5523"/><path d="M10 4Q14 6 18 3L16 9Q12 12 9 10Z" fill="#79bd34"/><path d="M1 10Q5 8 8 11L7 17Q3 15 0 16Z" fill="#4a91e8"/><path d="M9 11Q12 13 16 10L15 16Q11 19 8 17Z" fill="#f7c631"/></svg>开始</button>
      <div class="watermark"><strong>三维网</strong><span>3dPortal.cn</span></div>
    </div>
    <div class="tasks">
      <button type="button"><svg class="icon"><use href="#ie"/></svg><span>请告诉<span class="en">AUTOCAD</span>线<span class="en">...</span></span></button>
      <button type="button"><svg class="icon"><use href="#ie"/></svg><span>元旦放假期间组员<span class="en">...</span></span></button>
      <button type="button" class="active"><svg class="icon"><use href="#acad"/></svg><span class="en">AutoCAD 2006 - [...</span></button>
      <button type="button"><svg class="icon" viewBox="0 0 16 16"><path d="M5 2H13L15 4V15H5Z" fill="#fff" stroke="#6c8099"/><path d="M12 6H14M12 8H14M7 12H13" stroke="#6d87b0"/><path d="M1 1H11V10H1Z" fill="#eef4ff" stroke="#3258a5"/><path d="M2 3L4 8L6 4L8 8L10 3" fill="none" stroke="#2855b0" stroke-width="1.5"/></svg><span>文档<span class="en"> 1 - Microso...</span></span></button>
      <button type="button"><svg class="icon" viewBox="0 0 16 16"><path d="M1 3H6L8 5H14V14H1Z" fill="#f5d76c" stroke="#a7812c"/><path d="M3 7H16L14 14H1Z" fill="#fff09c" stroke="#b49539"/></svg><span>三</span></button>
    </div>
    <div class="language">
      <svg class="icon" viewBox="0 0 16 16"><path d="M.5 5.5H15.5V13.5H.5Z" fill="#fff" stroke="#000"/><path d="M2 8H14M2 10H14M4 12H12" stroke="#111" stroke-dasharray="1 1"/><path d="M3 4Q6 0 8 3T12 2" fill="none" stroke="#0a174b"/></svg>
      <svg class="icon" viewBox="0 0 16 16"><path d="M9 3L13 0L16 3L13 7L10 6Z" fill="#ddd" stroke="#222"/><path d="M10 6L4 12" stroke="#222" stroke-width="4"/><path d="M10 6L4 12" stroke="#d9d9ca" stroke-width="2"/><path d="M5 12L3 10L1 13V16Q5 16 7 14" fill="none" stroke="#111"/></svg>
      <svg class="icon" viewBox="0 0 16 16"><path d="M1 1H15V11H1Z" fill="#fff" stroke="#111"/><path d="M1 3H15" stroke="#153890" stroke-width="2"/><path d="M3 6H8M3 8H7" stroke="#222"/><path d="M12 5L6 12Q3 16 9 15" fill="none" stroke="#111" stroke-width="1.5"/><path d="M10 5L13 8" stroke="#777" stroke-width="3"/></svg>
      <svg class="icon help-note" viewBox="0 0 16 16"><path d="M2 1H14V13H11V15L9 13H2Z" fill="#ffffd5" stroke="#222"/><text x="5" y="11">?</text></svg>
      <svg class="icon" viewBox="0 0 16 16"><path d="M6 4V1H12V5H10M4 4H10V8H4Z" fill="none" stroke="#fff"/><path d="M4 12H11L7.5 15Z" fill="#fff"/></svg>
    </div>
    <div class="tray">
      <button type="button" class="expand" aria-label="显示隐藏的图标"><svg class="icon" viewBox="0 0 16 16"><path d="M10 4L6 8L10 12" fill="none" stroke="#fff" stroke-width="2"/></svg></button>
      <div class="tray-icons">
        <svg class="icon" viewBox="0 0 16 16"><circle cx="5" cy="6" r="4" fill="#f6c7a0"/><path d="M1 8V4Q3-1 9 2V7L6 4L3 5Z" fill="#922c21"/><circle cx="11" cy="6" r="4" fill="#f2bc94"/><path d="M7 6V2Q12-2 15 3V10L12 4L9 5Z" fill="#742019"/><path d="M1 15Q4 8 8 15Z" fill="#e5eefa"/><path d="M8 15Q12 8 16 15Z" fill="#4bab34"/></svg>
        <svg class="icon" viewBox="0 0 16 16"><path d="M6 1H15V8H6Z" fill="#294888" stroke="#a9bcdf"/><path d="M10 8V10H14" stroke="#9bb1d8" stroke-width="2"/><path d="M1 6H9V13H1Z" fill="#193877" stroke="#a9bcdf"/><path d="M3 15H9" stroke="#8ea6d2" stroke-width="2"/></svg>
      </div>
      <div class="clock"><time class="en">22:44</time><span>星期二</span><time class="en">2007-1-2</time></div>
    </div>
  </footer>

</body>
</html>
```
FILE: styles.css
```css
/* Reset and base styling */
* {
  margin: 0;
  padding: 0;
  box-sizing: border-box;
}

body {
  height: 100vh;
  display: flex;
  flex-direction: column;
  overflow: hidden;
  background: #b9b191;
  color: #000;
  font-family: "Noto Sans CJK SC", sans-serif;
  font-size: 12px;
  line-height: 14px;
}

button,
input,
select {
  font: inherit;
  color: inherit;
  border: none;
  border-radius: 0;
  background: none;
}

button {
  display: flex;
  align-items: center;
  justify-content: center;
  flex: none;
  white-space: nowrap;
}

svg {
  display: block;
  flex: none;
}

h1,
h2 {
  font-size: 12px;
  font-weight: normal;
}

.defs {
  position: absolute;
  width: 0;
  height: 0;
}

.icon {
  width: 16px;
  height: 16px;
}

.tiny {
  width: 8px;
  height: 8px;
}

.en {
  font-family: "DejaVu Sans Mono", monospace;
  font-size: 10px;
}

.mono {
  font-family: "Liberation Mono", monospace;
  font-size: 13px;
}

/* Main window */
.window {
  flex: 1;
  min-height: 0;
  display: flex;
  flex-direction: column;
  margin: 3px 2px 0;
  border: solid #0a3bdc;
  border-width: 0 4px 4px;
  border-radius: 8px 8px 0 0;
  background: #ece9d8;
}

.title-bar {
  flex: none;
  display: flex;
  align-items: center;
  gap: 4px;
  height: 29px;
  margin: 0 -4px;
  padding: 2px 6px 0;
  border-radius: 8px 8px 0 0;
  background: linear-gradient(#0c5be8, #3b92fb 2px, #0560ef 5px, #0052e0 12px, #0560f5 22px, #0565fb 26px, #0348ca);
}

.title-bar h1 {
  flex: 1;
  color: #fff;
  font: bold 13px/16px "Liberation Mono", monospace;
  text-shadow: 1px 1px #0f1c6b;
}

.window-buttons {
  display: flex;
  gap: 2px;
}

.window-buttons button {
  width: 21px;
  height: 21px;
  border: 1px solid #fff;
  border-radius: 3px;
  background: linear-gradient(135deg, #7ba0f2, #2258d8 40%, #1646c3);
}

.window-buttons .close {
  background: linear-gradient(135deg, #f09b80, #df4f28 45%, #c4370f);
}

.glyph {
  width: 21px;
  height: 21px;
}

.menu-bar {
  flex: none;
  display: flex;
  align-items: center;
  height: 20px;
  padding: 0 2px 0 4px;
  border-bottom: 2px solid #fff;
}

.menu-bar > .icon {
  margin-right: -1px;
}

.menu-bar > button {
  padding: 0 6px;
}

.menu-bar u {
  text-underline-offset: 1px;
}

.child-buttons {
  display: flex;
  gap: 2px;
  margin-left: auto;
}

.child-buttons button {
  border-bottom: 1px solid #d5d2c5;
  background: #f5f4ee;
}

/* Toolbars */
.toolbar-row {
  flex: none;
  display: flex;
  gap: 3px;
  height: 28px;
  overflow: hidden;
}

.toolbar {
  display: flex;
  align-items: center;
  flex: none;
  padding-right: 4px;
  border: solid #fff;
  border-width: 1px 0 0 1px;
  box-shadow: inset -1px -1px #aaa797;
}

.toolbar.fill {
  padding-right: 0;
}

.grip {
  flex: none;
  width: 7px;
  height: 22px;
  margin: 0 2px;
  border: solid #fff;
  border-width: 0 2px;
  box-shadow: 1px 0 #aaa797, inset -1px 0 #aaa797;
}

.tool {
  width: 23px;
  height: 22px;
}

.drop {
  width: 12px;
  height: 22px;
}

.separator {
  width: 2px;
  height: 22px;
  margin: 0 2px;
  border-left: 1px solid #c5c2b3;
  border-right: 1px solid #fff;
}

.tool.help {
  width: 16px;
  height: 16px;
  margin: 0 4px;
  background: #2863a5;
  color: #fff;
  font: bold 14px/16px "Liberation Sans", sans-serif;
}

.tool-label {
  width: 16px;
  height: 16px;
  margin: 0 3px;
}

/* Drop-down lists, arrow and picture share the cell of the select */
.combo {
  flex: none;
  display: grid;
  align-items: center;
  height: 22px;
  border: 1px solid #7f9db9;
  background: #fff;
}

.combo > * {
  grid-area: 1 / 1;
}

.combo select {
  appearance: none;
  width: 100%;
  height: 20px;
  padding: 0 18px 0 4px;
  font-family: "DejaVu Sans Mono", monospace;
  font-size: 10px;
}

.combo .cn {
  font-family: "Noto Sans CJK SC", sans-serif;
  font-size: 12px;
}

.arrow {
  justify-self: end;
  width: 15px;
  height: 18px;
  margin-right: 1px;
  border-radius: 2px;
  background: linear-gradient(135deg, #dbe5fd, #b3c8f8);
  pointer-events: none;
}

.style {
  width: 101px;
}

.layer {
  width: 299px;
}

.layer select {
  padding-left: 84px;
}

.layer-state {
  width: 82px;
  height: 18px;
  margin-left: 2px;
  pointer-events: none;
}

.color {
  width: 150px;
}

.color select {
  padding-left: 18px;
}

.swatch {
  width: 10px;
  height: 10px;
  margin-left: 5px;
  background: #000;
}

.linetype {
  width: 160px;
}

.linetype select {
  padding-left: 68px;
}

.weight {
  width: 125px;
}

.weight select {
  padding-left: 43px;
}

.sample {
  width: 60px;
  height: 1px;
  margin-left: 4px;
  background: #000;
}

.weight .sample {
  width: 35px;
}

.plot {
  width: 120px;
  border-color: #c9c7ba;
  background: #ece9d8;
}

.plot select {
  padding-left: 8px;
  color: #aca899;
  opacity: 1;
}

.plot .arrow {
  background: #e5e3d8;
  opacity: .5;
}

/* Workspace */
.workspace {
  flex: 1;
  min-height: 0;
  display: flex;
}

.dock {
  flex: none;
  width: 27px;
  padding: 2px 1px 0 0;
}

.vertical {
  flex-direction: column;
  align-items: flex-start;
  padding: 0 0 5px;
}

.vertical .grip {
  width: 20px;
  height: 6px;
  margin: 1px 2px;
  border-width: 2px 0;
  box-shadow: 0 1px #aaa797, inset 0 -1px #aaa797;
}

.dock .toolbar + .toolbar {
  margin-top: 4px;
}

.mtext {
  font: 18px/22px "Liberation Sans", sans-serif;
}

.document {
  flex: 1;
  min-width: 0;
  display: flex;
  flex-direction: column;
  margin-right: 2px;
  border: solid #77756a;
  border-width: 2px 0 0 1px;
}

.canvas {
  flex: 1;
  min-height: 0;
  position: relative;
  display: flex;
  background: #fff;
}

.drawing {
  flex: 1;
  min-width: 0;
  height: 100%;
}

.ucs {
  position: absolute;
  left: 8px;
  bottom: 6px;
  width: 90px;
  height: 92px;
  font: 16px "Liberation Sans", sans-serif;
}

.scroll {
  flex: none;
  display: flex;
  background: #f6f5f0;
}

.scroll.v {
  flex-direction: column;
  width: 17px;
}

.scroll button,
.thumb {
  flex: none;
  width: 16px;
  height: 16px;
  border: 1px solid #e6edfc;
  border-radius: 2px;
  background: linear-gradient(135deg, #dbe5fd, #b3c8f8);
  box-shadow: inset -1px -1px #a8bef0;
}

.thumb {
  background: repeating-linear-gradient(90deg, #eef4fe 0 1px, #9fb5e8 1px 2px) center / 8px 7px no-repeat, #c8d8fc;
}

.v .thumb {
  background: repeating-linear-gradient(#eef4fe 0 1px, #9fb5e8 1px 2px) center / 7px 8px no-repeat, #c8d8fc;
}

.before {
  flex: 13;
}

.after {
  flex: 10;
}

.sheet-bar {
  flex: none;
  display: flex;
  height: 17px;
}

.sheet-nav {
  display: flex;
  border-top: 1px solid #000;
}

.sheet-nav button {
  width: 18px;
  border-right: 1px solid #aca899;
}

.sheets {
  flex: 2 1 478px;
  display: flex;
  padding-left: 3px;
  background: linear-gradient(#000, #000) top / 100% 1px no-repeat;
}

.sheet {
  display: grid;
  width: 42px;
  line-height: 12px;
  margin-right: -1px;
}

.sheet > * {
  grid-area: 1 / 1;
}

.sheet > span {
  align-self: start;
}

.outline {
  width: 42px;
  height: 17px;
}

.splitter {
  width: 6px;
  margin: 1px 1px 2px 0;
  border: 1px solid #aca899;
  background: #f5f4ee;
}

.sheet-bar .scroll {
  flex: 1 1 279px;
  margin-right: 17px;
}

/* Tool palettes */
.palette {
  flex: none;
  display: flex;
  width: 94px;
  margin: 2px 0 4px 4px;
  border-left: 2px solid #222;
  background: #efeeea;
}

.palette-tabs {
  flex: none;
  width: 19px;
  padding-left: 2px;
  background: #ece9d8;
}

.palette-tabs button {
  width: 16px;
  height: 69px;
  border: 1px solid #aaa797;
  border-radius: 5px 0 0 5px;
}

.palette-tabs .active {
  width: 17px;
  border-right: none;
  background: #efeeea;
  font-weight: bold;
}

.palette-tabs span {
  writing-mode: vertical-rl;
  text-orientation: sideways;
  transform: rotate(180deg);
}

.palette-main {
  flex: 1;
  min-width: 0;
  display: flex;
  flex-direction: column;
}

.palette-head {
  flex: none;
  display: flex;
  align-items: center;
  justify-content: space-between;
  height: 16px;
  padding: 2px 5px 0 3px;
}

.palette-head .grip {
  flex: 1;
  height: 6px;
  margin: 0 5px 0 0;
  border-width: 2px 0;
  box-shadow: 0 1px #aaa797, inset 0 -1px #aaa797;
}

.palette-head button {
  width: 11px;
  height: 11px;
  border: solid #333;
  border-width: 0 1px 0 0;
}

.palette-body {
  flex: 1;
  min-height: 0;
  display: flex;
}

.palette-list {
  flex: 1;
  overflow: hidden;
}

.palette-list h2 {
  margin: 5px 0 9px 2px;
  white-space: nowrap;
}

.palette-list h2 ~ h2 {
  margin-bottom: 12px;
}

.sample-tool {
  justify-content: flex-start;
  gap: 2px;
  width: 100%;
  height: 42px;
  padding-left: 9px;
}

.sample-tool svg {
  width: 30px;
  height: 32px;
}

.sample-tool span {
  width: 15px;
  line-height: 13px;
  white-space: normal;
}

.next-sample {
  width: 60px;
  height: 10px;
}

.palette-scroll {
  flex: none;
  display: flex;
  flex-direction: column;
  justify-content: space-between;
  width: 11px;
  background: #fcfcfa;
}

.palette-scroll button {
  width: 11px;
  height: 12px;
  background: #dcdacb;
}

.bar {
  flex: 1;
  background: linear-gradient(#c4c2b6 50%, #fcfcfa 50%);
}

/* Command line */
.command {
  flex: none;
  display: flex;
  height: 57px;
  margin-top: 3px;
  padding: 4px 8px 1px 4px;
  border-top: 2px solid #222;
}

.command .grip {
  height: 44px;
  margin: 2px 4px 0 2px;
}

.command-box {
  flex: 1;
  display: flex;
  flex-direction: column;
  border: solid #222;
  border-width: 2px 0 0 2px;
  background: #fff;
  font-size: 13px;
  line-height: 13px;
}

.history {
  display: flex;
  justify-content: space-between;
  height: 32px;
  border-bottom: 1px solid #aca899;
}

.log p {
  height: 14px;
  line-height: 14px;
  white-space: nowrap;
}

.prompt {
  flex: 1;
  display: flex;
  align-items: center;
}

.prompt input {
  flex: 1;
  height: 14px;
}

.prompt .scroll {
  width: 82px;
  padding: 0 17px 0 0;
}

/* Status bar */
.status {
  flex: none;
  display: flex;
  align-items: center;
  height: 23px;
  padding: 2px 2px 1px 5px;
  border-top: 1px solid #aca899;
}

.coords {
  flex: 0 1 250px;
  height: 18px;
  padding-left: 1px;
  border: 1px solid #aca899;
  border-right-color: #fff;
  border-bottom-color: #fff;
  line-height: 17px;
}

.toggles {
  display: flex;
  gap: 4px;
  margin-left: 4px;
}

.toggles button {
  height: 19px;
  padding: 1px 2px 0;
  box-shadow: inset 1px 1px #fff, inset -1px -1px #aca899;
}

.toggles .on {
  box-shadow: inset 1px 1px #111, inset -1px -1px #fff;
}

.marked {
  position: relative;
}

.mark {
  position: absolute;
  left: -22px;
  top: -20px;
  z-index: 2;
  width: 76px;
  height: 52px;
}

.status-tray {
  display: flex;
  gap: 3px;
  margin-left: auto;
  padding: 1px 4px;
  border: 1px solid #aca899;
  border-width: 1px 0 0 1px;
}

.status .drop {
  width: 20px;
}

.resize {
  align-self: end;
  width: 14px;
  height: 14px;
}

/* Taskbar */
.taskbar {
  flex: none;
  display: flex;
  height: 60px;
  background: linear-gradient(#2a62d8, #4789f0 3px, #2b68e2 7px, #245fdd 20px, #235cdb 56px, #1a45ac);
}

.start-area {
  position: relative;
  width: 107px;
}

.start {
  justify-content: flex-start;
  gap: 8px;
  width: 97px;
  height: 27px;
  padding-left: 10px;
  border-radius: 0 8px 8px 0;
  background: linear-gradient(#54a254, #3c9a3c 5px, #338b35 20px, #2b7a2d);
  color: #fff;
  font-size: 18px;
  font-style: italic;
}

.flag {
  width: 20px;
  height: 20px;
}

.watermark {
  position: absolute;
  left: 8px;
  top: 9px;
  display: flex;
  flex-direction: column;
  color: rgba(125, 175, 245, .6);
  white-space: nowrap;
  pointer-events: none;
}

.watermark strong {
  font-size: 30px;
  line-height: 24px;
}

.watermark span {
  font: 17px/20px "Liberation Sans", sans-serif;
}

.tasks {
  flex: 0 1 638px;
  display: grid;
  grid-template-columns: repeat(4, 1fr);
  grid-auto-rows: 23px;
  gap: 7px 2px;
  padding-top: 4px;
}

.tasks button {
  justify-content: flex-start;
  gap: 4px;
  padding-left: 9px;
  border-radius: 2px;
  background: linear-gradient(#5a9bfb, #3c81f3 4px, #3a7df0 19px, #316dde);
  color: #fff;
}

.tasks .active {
  background: #1e4fb3;
  box-shadow: inset 1px 1px 2px #12347e;
}

.language {
  flex: 1;
  display: flex;
  align-items: center;
  justify-content: flex-end;
  gap: 5px;
  padding-right: 14px;
}

.help-note {
  font: bold 11px "Liberation Sans", sans-serif;
}

.tray {
  flex: none;
  display: flex;
  gap: 1px;
  width: 94px;
  border-left: 1px solid #0b63b5;
  background: linear-gradient(#0d7fd9, #28b5f5 3px, #139ceb 8px, #1191e9 50px, #0d78cf);
  color: #fff;
}

.expand {
  align-self: center;
  width: 17px;
  height: 17px;
  margin-left: -9px;
  border: 1px solid #8fc8f5;
  border-radius: 50%;
  background: #2b86dd;
}

.tray-icons {
  display: flex;
  flex-direction: column;
  gap: 2px;
  padding-top: 4px;
}

.clock {
  flex: 1;
  display: flex;
  flex-direction: column;
  align-items: center;
  justify-content: space-between;
  padding: 5px 0;
}
```
